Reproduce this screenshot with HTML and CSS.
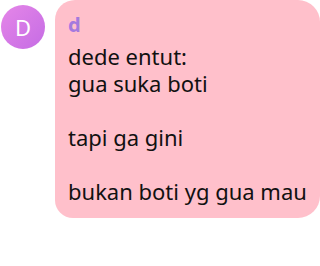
FILE: index.html
```html
<!DOCTYPE html>
<html>
<head>
<meta charset="utf-8">
<link rel="stylesheet" href="styles.css">
</head>
<body>
<div class="msg">
  <div class="avatar">D</div>
  <div class="bubble">
    <div class="name">d</div>
    <div class="text">dede entut:
gua suka boti

tapi ga gini

bukan boti yg gua mau</div>
  </div>
</div>
</body>
</html>
```
FILE: styles.css
```css
html, body {
  margin: 0;
  padding: 0;
  background: #ffffff;
}
body {
  font-family: "Noto Sans", "Open Sans", sans-serif;
}
.msg {
  display: flex;
  align-items: flex-start;
  gap: 10px;
  padding-left: 1px;
}
.avatar {
  flex: none;
  width: 44px;
  height: 44px;
  margin-top: 5px;
  border-radius: 50%;
  background: linear-gradient(135deg, #e586e8 0%, #c56ce4 100%);
  color: #ffffff;
  font-size: 22px;
  display: flex;
  align-items: center;
  justify-content: center;
}
.bubble {
  flex: 1;
  background: #ffc0cb;
  border-radius: 20px 22px 22px 18px;
  padding: 12px 10px 13px 13px;
}
.name {
  color: #a47ade;
  font-weight: 700;
  font-size: 20px;
  line-height: 26px;
}
.text {
  color: #111111;
  font-size: 22px;
  line-height: 27px;
  white-space: pre-wrap;
  margin-top: 5px;
}
```
